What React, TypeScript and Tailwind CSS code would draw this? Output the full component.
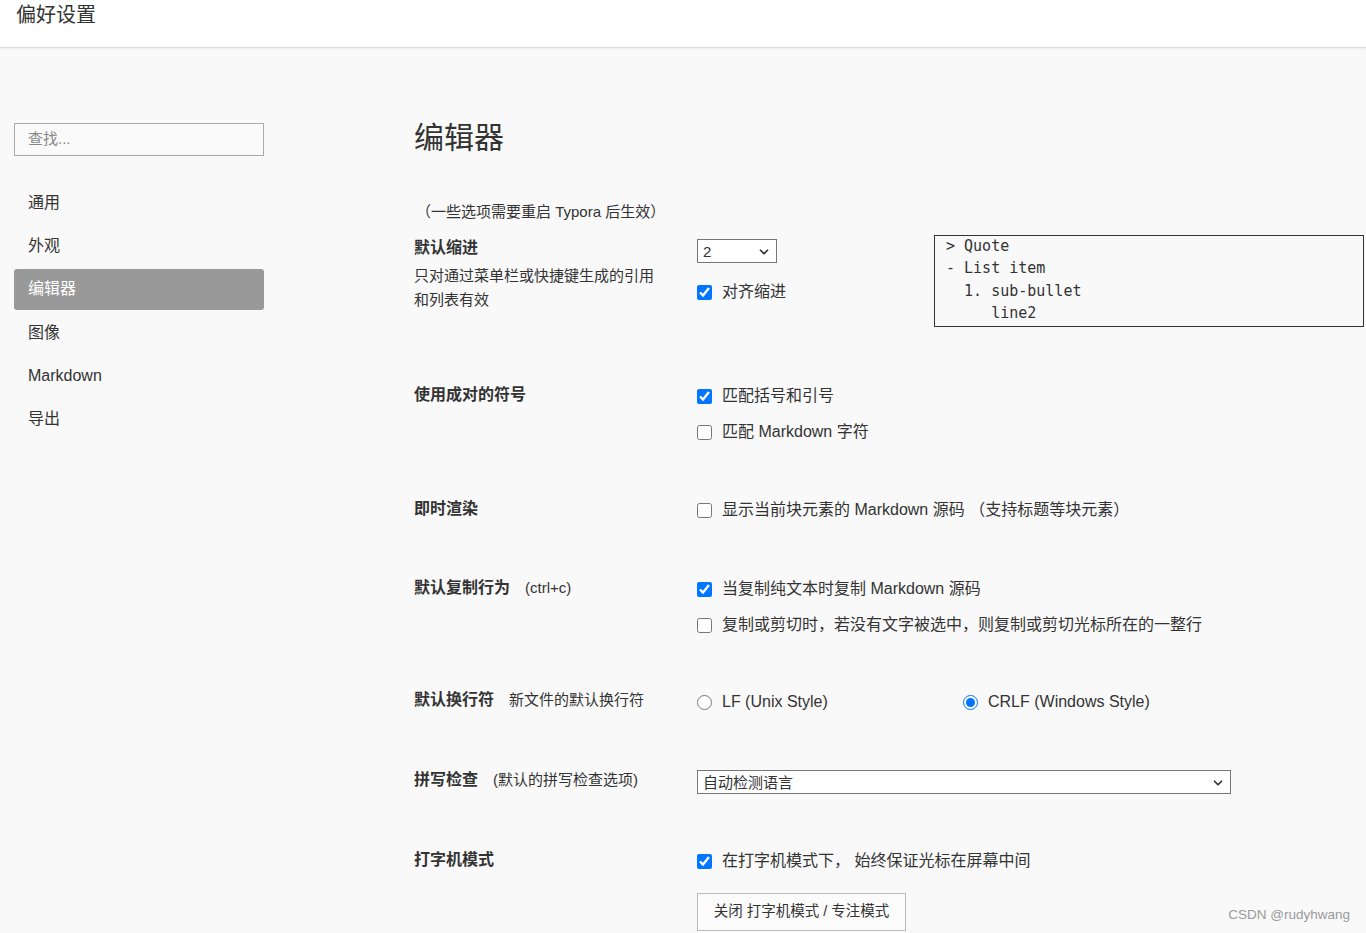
import { ChevronDown } from 'lucide-react'

const nav = ['通用', '外观', '编辑器', '图像', 'Markdown', '导出']

function Check({ checked, label }: { checked?: boolean; label: string }) {
  return (
    <label className="flex items-center h-6 text-[16px] text-[#333]">
      <input
        type="checkbox"
        defaultChecked={checked}
        className="w-[15px] h-[15px] m-0 accent-[#0075ff]"
      />
      <span className="ml-[10px]">{label}</span>
    </label>
  )
}

function Radio({ checked, label, className }: { checked?: boolean; label: string; className?: string }) {
  return (
    <label className={`flex items-center h-6 text-[16px] text-[#333] ${className ?? ''}`}>
      <input
        type="radio"
        name="eol"
        defaultChecked={checked}
        className="w-[15px] h-[15px] m-0 accent-[#0075ff]"
      />
      <span className="ml-[10px]">{label}</span>
    </label>
  )
}

function Label({ title, note }: { title: string; note?: string }) {
  return (
    <div className="flex items-baseline h-6 leading-6">
      <span className="text-[16px] font-bold text-[#333]">{title}</span>
      {note && <span className="ml-[15px] text-[15px] text-[#333]">{note}</span>}
    </div>
  )
}

export default function App() {
  return (
    <div className="min-h-screen bg-[#f9f9f9] font-['Liberation_Sans','Noto_Sans_CJK_SC',sans-serif] text-[#333] relative">
      <header className="h-[48px] bg-white border-b border-[#dcdcdc] shadow-[0_1px_2px_rgba(0,0,0,0.06)] px-4 pt-[3px]">
        <h1 className="text-[20px] leading-6 text-[#333]">偏好设置</h1>
      </header>

      <div className="flex">
        <aside className="w-[264px] pl-[14px] pt-[75px] shrink-0">
          <div className="h-[33px] border border-[#aaa] bg-[#fafafa] flex items-center px-[13px] text-[15px] text-[#888]">
            查找...
          </div>
          <nav className="mt-[26px] flex flex-col gap-[2.4px]">
            {nav.map((n) => (
              <div
                key={n}
                className={
                  n === '编辑器'
                    ? 'h-[41px] flex items-center px-[14px] rounded-[3px] bg-[#999] text-white text-[16px]'
                    : 'h-[41px] flex items-center px-[14px] text-[16px] text-[#333]'
                }
              >
                {n}
              </div>
            ))}
          </nav>
        </aside>

        <main className="ml-[150px] flex-1 pt-[70px]">
          <h2 className="text-[30px] leading-10 text-[#333]">编辑器</h2>
          <p className="mt-[42px] text-[15px] leading-6 pl-[2px]">（一些选项需要重启 Typora 后生效）</p>

          {/* 默认缩进 */}
          <div className="mt-[12px] h-[147px] grid grid-cols-[283px_237px_1fr]">
            <div>
              <Label title="默认缩进" />
              <p className="mt-[4px] text-[15px] leading-6 w-[245px]">只对通过菜单栏或快捷键生成的引用和列表有效</p>
            </div>
            <div className="pt-[3px]">
              <div className="relative w-[80px] h-[24px] border border-[#767676] bg-white">
                <select className="appearance-none w-full h-full px-[5px] pb-[2px] text-[15px] bg-transparent outline-none">
                  <option>2</option>
                  <option>4</option>
                </select>
                <ChevronDown className="absolute right-[5px] top-[5px] w-[14px] h-[14px] pointer-events-none" strokeWidth={3} />
              </div>
              <div className="mt-[17px]">
                <Check checked label="对齐缩进" />
              </div>
            </div>
            <div className="-mt-[1px]">
              <div className="w-[430px] h-[92px] border border-[#333] pl-[11px]">
                <pre className="-mt-[1px] font-['DejaVu_Sans_Mono',monospace] text-[15px] leading-[22.3px] text-[#333]">
{`> Quote
- List item
  1. sub-bullet
     line2`}
                </pre>
              </div>
            </div>
          </div>

          {/* 使用成对的符号 */}
          <div className="h-[114px] grid grid-cols-[283px_1fr]">
            <Label title="使用成对的符号" />
            <div className="pt-[1px] flex flex-col gap-[12px]">
              <Check checked label="匹配括号和引号" />
              <Check label="匹配 Markdown 字符" />
            </div>
          </div>

          {/* 即时渲染 */}
          <div className="h-[79px] grid grid-cols-[283px_1fr]">
            <Label title="即时渲染" />
            <div className="pt-[1px]">
              <Check label="显示当前块元素的 Markdown 源码 （支持标题等块元素）" />
            </div>
          </div>

          {/* 默认复制行为 */}
          <div className="h-[112px] grid grid-cols-[283px_1fr]">
            <Label title="默认复制行为" note="(ctrl+c)" />
            <div className="pt-[1px] flex flex-col gap-[12px]">
              <Check checked label="当复制纯文本时复制 Markdown 源码" />
              <Check label="复制或剪切时，若没有文字被选中，则复制或剪切光标所在的一整行" />
            </div>
          </div>

          {/* 默认换行符 */}
          <div className="h-[80px] grid grid-cols-[283px_1fr]">
            <Label title="默认换行符" note="新文件的默认换行符" />
            <div className="pt-[2px] flex">
              <Radio label="LF (Unix Style)" className="w-[266px]" />
              <Radio checked label="CRLF (Windows Style)" />
            </div>
          </div>

          {/* 拼写检查 */}
          <div className="h-[80px] grid grid-cols-[283px_1fr]">
            <Label title="拼写检查" note="(默认的拼写检查选项)" />
            <div className="pt-[2px]">
              <div className="relative w-[534px] h-[24px] border border-[#767676] bg-white">
                <select className="appearance-none w-full h-full px-[5px] pb-[3px] text-[15px] bg-transparent outline-none">
                  <option>自动检测语言</option>
                </select>
                <ChevronDown className="absolute right-[5px] top-[5px] w-[14px] h-[14px] pointer-events-none" strokeWidth={3} />
              </div>
            </div>
          </div>

          {/* 打字机模式 */}
          <div className="grid grid-cols-[283px_1fr]">
            <Label title="打字机模式" />
            <div className="pt-[1px]">
              <Check checked label="在打字机模式下， 始终保证光标在屏幕中间" />
              <button className="mt-[20px] w-[209px] h-[38px] border border-[#bbb] bg-[#fbfbfb] text-[14.5px] text-[#333]">
                关闭 打字机模式 / 专注模式
              </button>
            </div>
          </div>
        </main>
      </div>

      <div className="absolute right-[16px] bottom-[8px] text-[13.5px] text-[#999]">CSDN @rudyhwang</div>
    </div>
  )
}
